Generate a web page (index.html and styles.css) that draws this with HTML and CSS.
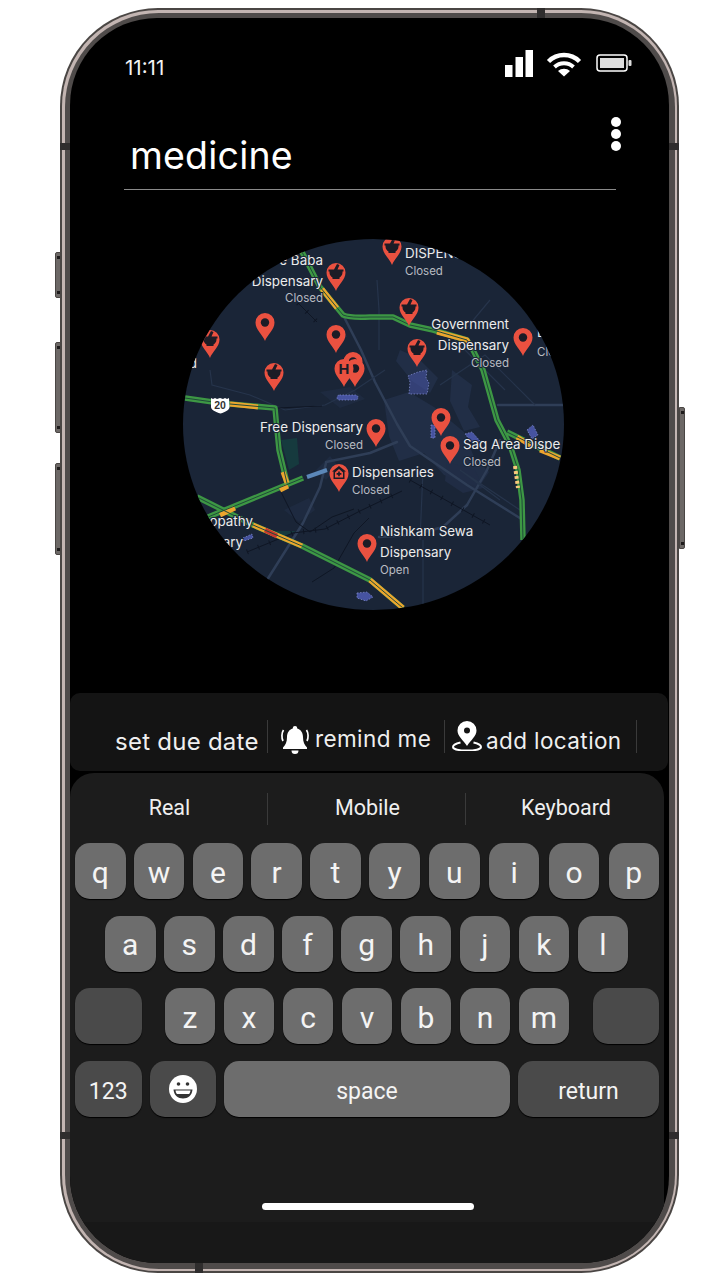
FILE: index.html
```html
<!DOCTYPE html>
<html lang="en">
<head>
<meta charset="utf-8">
<title>medicine</title>
<link rel="stylesheet" href="styles.css">
</head>
<body>
<div class="phone">
  <span class="btn btn-l1"></span><span class="btn btn-l2"></span><span class="btn btn-l3"></span><span class="btn btn-r1"></span>
  <span class="notch n-top"></span><span class="notch n-bottom"></span>
  <span class="notch n-lt"></span><span class="notch n-rt"></span><span class="notch n-lb"></span><span class="notch n-rb"></span>
  <div class="band"><div class="bezel"><div class="screen">

    <header class="status">
      <span class="time">11:11</span>
      <div class="status-icons">
        <svg class="ic-signal" viewBox="0 0 28 27"><path d="M0 15h7.500v12H0zM10.500 7H18v20h-7.500zM20.500 0H28v27h-7.500z" fill="#fff"/></svg>
        <svg class="ic-wifi" viewBox="0 0 36 26"><g fill="none" stroke="#fff"><path d="M2.500 10.500a22 22 0 0 1 31 0" stroke-width="4.500"/><path d="M8.500 16a14 14 0 0 1 19 0" stroke-width="4"/></g><path d="M18 25.500l-6-5.500a9 9 0 0 1 12 0z" fill="#fff"/></svg>
        <svg class="ic-battery" viewBox="0 0 36 18"><rect x="1" y="1" width="30" height="16" rx="3" fill="none" stroke="#fff" stroke-width="1.500"/><rect x="4" y="4" width="24" height="10" fill="#ddd"/><rect x="32.500" y="6" width="3" height="6" rx="1" fill="#ddd"/></svg>
      </div>
    </header>

    <div class="title-row">
      <h1 class="title">medicine</h1>
      <div class="dots"><i></i><i></i><i></i></div>
    </div>

    <div class="map-wrap">
      <svg class="map" viewBox="183 239 381 371">
        <defs>
          <clipPath id="disc"><ellipse cx="373.500" cy="424.500" rx="190.500" ry="185.500"/></clipPath>
          <path id="drop" d="M0 0C-2-6-9.500-11-9.500-18.500a9.500 9.500 0 0 1 19 0C9.500-11 2-6 0 0z" fill="#ea5140"/>
          <g id="pin-dot"><use href="#drop"/><circle cy="-18.500" r="4.200" fill="#1c1c26"/></g>
          <g id="pin-mortar"><use href="#drop"/><path d="M-7.500-21.500h15v2h-1v1c0 2.500-1.500 4-3 5v1.500h-7V-13.500c-1.500-1-3-2.500-3-5v-1h-1zM-2-21.500l3-5.500 2.500 1-2 4.500z" fill="#1c1c26"/></g>
          <g id="pin-h"><use href="#drop"/><text class="pin-h" y="-13" text-anchor="middle">H</text></g>
          <g id="pin-home"><use href="#drop"/><path d="M0-26l7 5.500h-1.500v7.500h-11v-7.500H-7zM-4-19.500v5h8v-5L0-23z" fill="#1c1c26" fill-rule="evenodd"/><path d="M-.8-20.500h1.600v1.600h1.600v1.600H.8v1.600H-.8v-1.600h-1.600v-1.600H-.8z" fill="#1c1c26"/></g>
        </defs>
        <g clip-path="url(#disc)">
          <rect x="183" y="239" width="381" height="371" fill="#1a2537"/>
          <g fill="#212e46">
            <path d="M384 400l25-8 25 15 30 25 10 25 15 15-10 15-35-12-20-22-25 8-10-25z"/>
            <path d="M400 350l18 8 20 20-8 15-18-12-16-20z"/>
            <path d="M452 370l20 15-4 22 12 20-16 4-14-30z"/>
            <path d="M320 392l30-5 15 12-25 9z" opacity=".6"/>
            <path d="M284 510l25-12 6 12-16 12z" opacity=".6"/>
            <path d="M316 470l14-14 8 10-12 14z" opacity=".7"/>
            <path d="M447 462l28 8 8 18-20 5-18-12z" opacity=".9"/>
            <path d="M330 325l12 2 5 10-12 3z"/>
          </g>
          <path d="M281 440l16-2 2 26-10 6z" fill="#163a3e"/>
          <path d="M272 531l24 0-12 6z" fill="#163a3e"/>
          <g fill="none" stroke="#2f3e57" stroke-width="2.500" stroke-linejoin="round" stroke-linecap="round">
            <path d="M343 315l18 35 14 32 22 42 13 22 57 39 56 35"/>
            <path d="M267 580l36-57 17-36 6-24"/>
            <path d="M326 462l44-9 27-11"/>
            <path d="M467 505l20-35 13-30"/>
            <path d="M467 505l-24 22-30 8-34 2"/>
            <path d="M498 405l66 0"/>
          </g>
          <g fill="none" stroke="#26344b" stroke-width="1.200">
            <path d="M210 370l2 15 38 10 35 15 40-5 30-15 30-20"/>
            <path d="M377 280l2 30 0 40"/>
            <path d="M440 385l45-30 50 50"/>
            <path d="M490 300l-25 30M445 330l60 60"/>
            <path d="M423 540V610"/>
            <path d="M423 470l-3 70"/>
            <path d="M500 500l-40-30 60 40"/>
          </g>
          <g fill="none" stroke="#0f1624" stroke-width="1">
            <path d="M281 492l15 30 14 10 22-15 22-8"/>
            <path d="M312 582l22-14 20-35 15-15"/>
            <path d="M247 552l46-19 32-4 35-18 42-20"/>
            <path d="M298 303l19 19"/>
            <path d="M277 408l45-2"/>
            <path d="M410 480l80 45"/>
          </g>
          <g fill="none" stroke="#0f1624" stroke-width="5" stroke-dasharray="1 11">
            <path d="M247 552l46-19 32-4 35-18 42-20"/>
            <path d="M298 303l19 19"/>
            <path d="M410 480l80 45"/>
          </g>
          <g fill="#4653a0" stroke="#7b86c6" stroke-width=".8" stroke-dasharray="1.500 1.500">
            <path d="M408 376l10-4 9-2-1 8 3 5-2 11h-18l1-12z" fill-opacity=".6"/>
            <rect x="337" y="395" width="21" height="5" rx="2.500"/>
            <path d="M527 430l6-5 5 10-6 4z"/>
            <path d="M431 425l4 0 0 13-4 0z"/>
            <path d="M465 434l7-2 8 9-7 3z"/>
            <path d="M243 538l9-4 1 4-9 3z"/>
            <path d="M357 593l10-1 6 5-7 4-9-3z"/>
          </g>
          <g fill="none" stroke-linejoin="round">
            <g stroke="#3d9744" stroke-width="5.500">
              <path d="M302 252L320 287L343 315Q350 318 370 317L393 317L410 325L433 330L467 340L473 350L483 370L497 420L510 445L518 470L522 500L523 540"/>
              <path d="M507 432L560 458"/>
              <path d="M185 398L213 402L230 404L275 408L277 430L279 450L287 483"/>
              <path d="M208 517L303 478"/>
              <path d="M197 497L253 525L302 546L370 580L403 608"/>
            </g>
            <g stroke="#eca52e" stroke-width="5">
              <path d="M298 246L302 252"/>
              <path d="M322 289L337 308"/>
              <path d="M437 332L467 340L472 349"/>
              <path d="M230 404L258 407"/>
              <path d="M283 472L287 483"/>
              <path d="M280 490L288 486"/>
              <path d="M220 515L235 508"/>
              <path d="M253 525L302 546"/>
              <path d="M370 580L403 608"/>
              <path d="M517 437L533 447"/>
              <path d="M540 450L560 458"/>
            </g>
            <path d="M265 530L277 536" stroke="#c8392e" stroke-width="5"/>
            <path d="M307 477L327 470" stroke="#5b87b8" stroke-width="4"/>
            <g stroke="#1f4a38" stroke-width="1">
              <path d="M302 252L320 287L343 315Q350 318 370 317L393 317L410 325L433 330L467 340L473 350L483 370L497 420L510 445L518 470L522 500L523 540"/>
              <path d="M507 432L560 458"/>
              <path d="M185 398L213 402L230 404L275 408L277 430L279 450L287 483"/>
              <path d="M208 517L303 478"/>
              <path d="M197 497L253 525L302 546L370 580L403 608"/>
            </g>
            <path d="M515 466L518 488" stroke="#f7c87a" stroke-width="4" stroke-dasharray="3 2"/>
          </g>
          <g transform="translate(220 405)">
            <path d="M-9-7l2 1 2-1 2 1 3-1 3 1 2-1 2 1 2-1 .5 9c0 3-4 5-9 6.500-5-1.500-9.500-3.500-9.500-6.500z" fill="#fff"/>
            <text class="shield" y="4.200" text-anchor="middle">20</text>
          </g>
          <g class="lbl">
            <text x="323" y="265" text-anchor="end">e Baba</text>
            <text x="323" y="286" text-anchor="end">Dispensary</text>
            <text x="405" y="258">DISPENS</text>
            <text x="509" y="329" text-anchor="end">Government</text>
            <text x="509" y="350" text-anchor="end">Dispensary</text>
            <text x="537" y="337">L</text>
            <text x="363" y="432" text-anchor="end">Free Dispensary</text>
            <text x="352" y="477">Dispensaries</text>
            <text x="463" y="449">Sag Area Dispe</text>
            <text x="380" y="536">Nishkam Sewa</text>
            <text x="380" y="557">Dispensary</text>
            <text x="253" y="526" text-anchor="end">opathy</text>
            <text x="243" y="547" text-anchor="end">ary</text>
            <text x="197" y="368" text-anchor="end">d</text>
          </g>
          <g class="lbl sub">
            <text x="323" y="302" text-anchor="end">Closed</text>
            <text x="405" y="275">Closed</text>
            <text x="509" y="367" text-anchor="end">Closed</text>
            <text x="537" y="356">Clo</text>
            <text x="363" y="449" text-anchor="end">Closed</text>
            <text x="352" y="494">Closed</text>
            <text x="463" y="466">Closed</text>
            <text x="380" y="574">Open</text>
          </g>
          <use href="#pin-mortar" x="336" y="291"/>
          <use href="#pin-dot" x="265" y="341"/>
          <use href="#pin-dot" x="336" y="353"/>
          <use href="#pin-mortar" x="210" y="358"/>
          <use href="#pin-mortar" x="274" y="391"/>
          <use href="#pin-dot" x="353" y="380"/>
          <use href="#pin-dot" x="355" y="387"/>
          <use href="#pin-h" x="344" y="387"/>
          <use href="#pin-mortar" x="392" y="265"/>
          <use href="#pin-mortar" x="409" y="326"/>
          <use href="#pin-mortar" x="417" y="367"/>
          <use href="#pin-dot" x="523" y="356"/>
          <use href="#pin-dot" x="441" y="436"/>
          <use href="#pin-dot" x="376" y="447"/>
          <use href="#pin-dot" x="450" y="464"/>
          <use href="#pin-home" x="339" y="492"/>
          <use href="#pin-dot" x="367" y="562"/>
        </g>
      </svg>
    </div>

    <nav class="toolbar">
      <div class="tool tool-date"><span>set due date</span></div>
      <div class="tool tool-remind">
        <svg class="ic-bell" viewBox="0 0 30 28"><path d="M15 0a2.200 2.200 0 0 1 2.200 2.400C21 3.500 23 6.800 23 11c0 5 1.500 8 4 10.500V23H3v-1.500C5.500 19 7 16 7 11c0-4.200 2-7.500 5.800-8.600A2.200 2.200 0 0 1 15 0zM11.500 24.500h7a3.500 3.500 0 0 1-7 0z" fill="#fff"/><path d="M3.500 4C1.500 7 1.500 12 3 15M26.500 4c2 3 2 8 .5 11" fill="none" stroke="#fff" stroke-width="1.700"/></svg>
        <span>remind me</span>
      </div>
      <div class="tool tool-loc">
        <svg class="ic-loc" viewBox="0 0 30 30"><path d="M8.500 21.500C4 22.500 1 24 1 26c0 2.300 6.300 3.500 14 3.500s14-1.200 14-3.500c0-2-3-3.500-7.500-4.500" fill="none" stroke="#fff" stroke-width="2"/><path d="M15 25C11 19 5.500 15 5.500 9.500a9.500 9.500 0 0 1 19 0C24.500 15 19 19 15 25z" fill="#fff"/><circle cx="15" cy="9.500" r="3" fill="#141414"/></svg>
        <span>add location</span>
      </div>
    </nav>

    <section class="keyboard">
      <div class="suggest">
        <span>Real</span><span>Mobile</span><span>Keyboard</span>
      </div>
      <div class="rows">
        <div class="row row-1">
          <div class="grp grp-a"><b class="key">q</b><b class="key">w</b><b class="key">e</b><b class="key">r</b><b class="key">t</b></div>
          <div class="grp grp-b"><b class="key">y</b><b class="key">u</b><b class="key">i</b><b class="key">o</b><b class="key">p</b></div>
        </div>
        <div class="row row-2">
          <b class="key">a</b><b class="key">s</b><b class="key">d</b><b class="key">f</b><b class="key">g</b><b class="key">h</b><b class="key">j</b><b class="key">k</b><b class="key">l</b>
        </div>
        <div class="row row-3">
          <b class="key dark mod"></b>
          <div class="grp grp-c"><b class="key">z</b><b class="key">x</b><b class="key">c</b><b class="key">v</b><b class="key">b</b><b class="key">n</b><b class="key">m</b></div>
          <b class="key dark mod"></b>
        </div>
        <div class="row row-4">
          <b class="key dark mod small">123</b>
          <b class="key dark mod emoji">
            <svg class="ic-smile" viewBox="0 0 28 28"><circle cx="14" cy="14" r="14" fill="#fff"/><circle cx="9.500" cy="9" r="1.800" fill="#333"/><circle cx="18.500" cy="9" r="1.800" fill="#333"/><path d="M4.500 14.500h19c-.5 6-4.500 9-9.500 9s-9-3-9.500-9z" fill="#333"/><path d="M6.500 15.500h15c-.3 1.800-.8 2.800-1.500 3.500H8c-.7-.7-1.200-1.700-1.500-3.500z" fill="#fff"/></svg>
          </b>
          <b class="key space small">space</b>
          <b class="key dark ret small">return</b>
        </div>
      </div>
    </section>
    <footer class="foot"><span class="home"></span></footer>
  </div></div></div>
</div>
</body>
</html>
```
FILE: styles.css
```css
* { box-sizing: border-box; }
html, body { margin: 0; padding: 0; background: #fff; }
body { width: 720px; height: 1280px; overflow: hidden; font-family: "Inter", "Liberation Sans", sans-serif; color: #fff; }

.phone { position: relative; width: 619px; height: 1265px; margin: 8px 0 0 60px; padding: 2px; border-radius: 98px; background: #4a4644; }
.band { height: 100%; padding: 2.500px; border-radius: 96px; background: #c3b5b2; }
.bezel { height: 100%; padding: 5.500px; border-radius: 94px; background: #4f4b4a; }
.screen { display: flex; flex-direction: column; width: 100%; height: 100%; overflow: hidden; border-radius: 87px; background: #000; }

.btn { position: absolute; width: 6px; background: #6c6866; border: 1px solid #4a4644; }
.btn::before, .btn::after { content: ""; position: absolute; left: 1px; width: 3px; height: 3px; background: #1d1b1b; }
.btn::before { top: 3px; }
.btn::after { bottom: 3px; }
.btn-l1 { left: -5px; top: 244px; height: 46px; border-radius: 2px 0 0 2px; }
.btn-l2 { left: -5px; top: 334px; height: 91px; border-radius: 2px 0 0 2px; }
.btn-l3 { left: -5px; top: 455px; height: 92px; border-radius: 2px 0 0 2px; }
.btn-r1 { right: -6px; top: 399px; height: 142px; border-radius: 0 2px 2px 0; }
.notch { position: absolute; background: #2f2d2d; z-index: 2; }
.n-top { left: 477px; top: 0; width: 8px; height: 10px; }
.n-bottom { left: 135px; bottom: 0; width: 8px; height: 10px; }
.n-lt { left: 0; top: 135px; width: 10px; height: 7px; }
.n-rt { right: 0; top: 135px; width: 10px; height: 7px; }
.n-lb { left: 0; top: 1124px; width: 10px; height: 7px; }
.n-rb { right: 0; top: 1124px; width: 10px; height: 7px; }

.status { display: flex; flex: none; justify-content: space-between; align-items: flex-start; height: 60px; padding: 32px 37px 0 55px; }
.time { margin-top: 8px; font-size: 20.500px; line-height: 20px; color: #f2f2f2; }
.status-icons { display: flex; align-items: flex-start; }
.ic-signal { width: 28px; height: 27px; }
.ic-wifi { width: 36px; height: 26px; margin: 1px 0 0 13px; }
.ic-battery { width: 36px; height: 18px; margin: 4px 0 0 14px; }

.title-row { position: relative; flex: none; display: flex; height: 112px; margin: 0 53px 0 54px; border-bottom: 1px solid #8a8a8a; }
.title { margin: 53px 0 0 6px; font-size: 37.500px; font-weight: 400; line-height: 50px; letter-spacing: .2px; }
.dots { position: absolute; right: -5px; top: 39px; display: flex; flex-direction: column; gap: 2px; }
.dots i { display: block; width: 10px; height: 10px; border-radius: 50%; background: #fff; }

.map-wrap { flex: none; height: 503px; padding: 49px 0 0 113px; }
.map { display: block; width: 381px; height: 371px; }
.lbl text { font-family: "Inter", "Roboto", sans-serif; font-size: 13.400px; fill: #ececec; paint-order: stroke; stroke: #1a2537; stroke-width: 2px; }
.lbl.sub text { font-size: 11.500px; fill: #b9bcc2; }
.pin-h { font: 700 15px "Liberation Sans", sans-serif; fill: #1c1c26; }
.shield { font: 700 10.500px "Liberation Sans", sans-serif; fill: #333; }

.toolbar { flex: none; display: flex; width: 598px; height: 78px; margin-bottom: 2px; padding: 27px 0 0 45px; border-radius: 10px; background: #141414; }
.tool { display: flex; align-items: center; height: 33px; border-right: 1px solid #3a3a3a; font-size: 22.500px; letter-spacing: .4px; color: #efefef; }
.tool-date { width: 153px; padding-top: 10px; font-size: 24px; letter-spacing: .25px; }
.tool-remind { width: 177px; padding-left: 12px; padding-top: 4px; }
.tool-loc { width: 192px; padding-left: 7px; padding-top: 8px; }
.ic-bell { flex: none; width: 30px; height: 28px; margin: 2px 5px 0 0; }
.ic-loc { flex: none; width: 30px; height: 30px; margin: -9px 4px 0 0; }

.keyboard { flex: none; width: 594px; height: 449px; padding-top: 20px; border-radius: 24px 24px 0 0; background: #1c1c1c; font-family: "Roboto", sans-serif; }
.suggest { display: flex; height: 32px; }
.suggest span { display: flex; justify-content: center; align-items: center; width: 198px; padding: 0 0 3px 2px; border-right: 1px solid #3a3a3a; font-size: 21.500px; color: #efefef; }
.suggest span:last-child { border-right: 0; }
.rows { display: flex; flex-direction: column; gap: 16.600px; margin-top: 18px; padding: 0 5px; }
.row { display: flex; }
.row-1 { justify-content: space-between; }
.grp { display: flex; }
.grp-a { gap: 8.300px; }
.grp-b { gap: 9.300px; }
.row-2 { gap: 8.600px; padding-left: 30px; }
.row-3 { justify-content: space-between; }
.grp-c { gap: 8.500px; margin-left: -1px; margin-right: -1px; }
.row-4 { gap: 8px; }
.key { display: flex; flex: none; justify-content: center; align-items: center; width: 50.500px; height: 56px; padding-top: 2px; border-radius: 15px; background: #6d6d6d; box-shadow: 0 1px 1px #000; font-size: 30px; font-weight: 400; color: #f4f4f4; }
.key.dark { background: #4a4a4a; }
.key.mod { width: 66.500px; }
.key.small { padding-top: 5px; font-size: 23px; }
.key.emoji { padding-top: 0; }
.key.space { width: 286px; }
.key.ret { width: 141px; }
.ic-smile { width: 28px; height: 28px; }

.foot { flex: none; display: flex; justify-content: center; align-items: flex-start; height: 41px; background: #181818; }
.home { display: block; width: 212px; height: 7px; margin: -19px 0 0 -4px; border-radius: 4px; background: #fff; }
```
